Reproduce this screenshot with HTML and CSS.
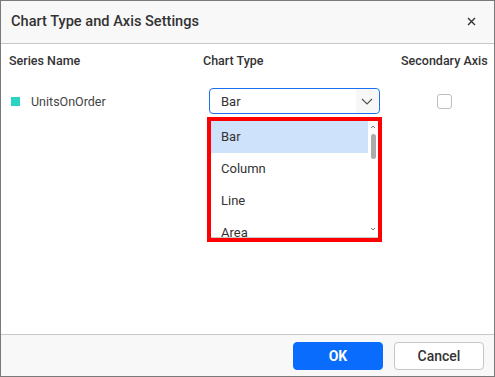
FILE: index.html
```html
<!DOCTYPE html>
<html lang="en">
<head>
    <meta charset="UTF-8">
    <meta name="viewport" content="width=device-width, initial-scale=1.0">
    <title>Chart Type and Axis Settings</title>
    <link rel="stylesheet" href="styles.css">
</head>
<body>
    <div class="dialog">
        <div class="dialog-header">
            <span class="dialog-title">Chart Type and Axis Settings</span>
            <button class="close-btn" aria-label="Close">
                <svg width="9" height="9" viewBox="0 0 9 9">
                    <path d="M1 1 L8 8 M8 1 L1 8" stroke="#333" stroke-width="1.4" fill="none"/>
                </svg>
            </button>
        </div>

        <div class="dialog-content">
            <div class="grid">
                <div class="col-head">Series Name</div>
                <div class="col-head">Chart Type</div>
                <div class="col-head">Secondary Axis</div>

                <div class="series">
                    <span class="swatch"></span>
                    <span>UnitsOnOrder</span>
                </div>
                <div class="type-cell">
                    <div class="dropdown">
                        <span class="dropdown-value">Bar</span>
                        <span class="dropdown-icon">
                            <svg width="12" height="7" viewBox="0 0 12 7">
                                <path d="M1 1 L6 6 L11 1" stroke="#555" stroke-width="1.2" fill="none"/>
                            </svg>
                        </span>
                    </div>
                    <div class="popup">
                        <ul class="popup-list">
                            <li class="active">Bar</li>
                            <li>Column</li>
                            <li>Line</li>
                            <li>Area</li>
                        </ul>
                        <div class="scrollbar">
                            <svg class="arrow" width="6" height="4" viewBox="0 0 6 4">
                                <path d="M1 3 L3 1 L5 3" stroke="#777" stroke-width="1" fill="none"/>
                            </svg>
                            <div class="thumb"></div>
                            <div class="track"></div>
                            <svg class="arrow" width="6" height="4" viewBox="0 0 6 4">
                                <path d="M1 1 L3 3 L5 1" stroke="#777" stroke-width="1" fill="none"/>
                            </svg>
                        </div>
                    </div>
                </div>
                <div class="check-cell">
                    <span class="checkbox"></span>
                </div>
            </div>
        </div>

        <div class="dialog-footer">
            <button class="btn btn-primary">OK</button>
            <button class="btn btn-default">Cancel</button>
        </div>
    </div>
</body>
</html>
```

FILE: styles.css
```css
body {
    margin: 0;
    font-family: Roboto, "Liberation Sans", sans-serif;
    color: #333;
}

.dialog {
    width: 495px;
    height: 377px;
    box-sizing: border-box;
    border: 1px solid #7a7a7a;
    display: flex;
    flex-direction: column;
    background: #fff;
}

.dialog-header {
    height: 42px;
    background: #f8f8f8;
    border-bottom: 1px solid #c8c8c8;
    display: flex;
    align-items: center;
    justify-content: space-between;
    padding: 0 18px 0 10px;
}

.dialog-title {
    font-size: 14.6px;
    font-weight: 500;
    color: #333;
    padding-bottom: 2px;
}

.close-btn {
    border: none;
    background: none;
    padding: 0;
    display: flex;
    margin-bottom: 2px;
}

.dialog-content {
    flex: 1;
    padding: 0 0 0 8px;
}

.grid {
    display: grid;
    grid-template-columns: 194px 198px 92px;
    grid-template-rows: 32px 26px;
    row-gap: 12px;
}

.col-head {
    font-size: 12.5px;
    font-weight: 500;
    color: #333;
    display: flex;
    align-items: center;
}

.series {
    display: flex;
    align-items: center;
    gap: 11px;
    padding-left: 2px;
    font-size: 12.5px;
    color: #444;
}

.swatch {
    width: 9px;
    height: 9px;
    background: #2ad4c4;
}

.type-cell {
    position: relative;
    padding-left: 6px;
}

.dropdown {
    width: 171px;
    height: 26px;
    box-sizing: border-box;
    border: 1px solid #1a6ff0;
    border-radius: 4px;
    display: flex;
    align-items: center;
    justify-content: space-between;
    padding-left: 11px;
    font-size: 13px;
    color: #333;
}

.dropdown-icon {
    width: 22px;
    height: 24px;
    display: flex;
    align-items: center;
    justify-content: center;
    background: #f7f7f7;
    margin-right: 1px;
    border-radius: 0 3px 3px 0;
}

.popup {
    position: absolute;
    top: 29px;
    left: 4px;
    width: 175px;
    height: 125px;
    box-sizing: border-box;
    border: 4px solid #ff0000;
    background: #fff;
    display: flex;
}

.popup-list {
    list-style: none;
    margin: 0;
    padding: 0;
    flex: 1;
    overflow: hidden;
    border-bottom: 1px solid #c8c8c8;
}

.popup-list li {
    height: 32px;
    line-height: 32px;
    padding-left: 10px;
    font-size: 13px;
    color: #333;
}

.popup-list li.active {
    background: #cfe2fc;
}

.scrollbar {
    width: 10px;
    display: flex;
    flex-direction: column;
    align-items: center;
    padding: 4px 0 6px;
    border-bottom: 1px solid #c8c8c8;
}

.arrow {
    display: block;
}

.thumb {
    width: 5px;
    height: 25px;
    background: #ababab;
    border-radius: 3px;
    margin-top: 5px;
}

.track {
    flex: 1;
}

.check-cell {
    display: flex;
    align-items: center;
    padding-left: 36px;
}

.checkbox {
    width: 15px;
    height: 15px;
    box-sizing: border-box;
    border: 1px solid #bdbdbd;
    border-radius: 3px;
    background: #fff;
}

.dialog-footer {
    height: 41px;
    background: #f8f8f8;
    border-top: 1px solid #c8c8c8;
    display: flex;
    justify-content: flex-end;
    align-items: center;
    gap: 11px;
    padding-right: 10px;
}

.btn {
    width: 90px;
    height: 28px;
    border-radius: 4px;
    font-family: Roboto, "Liberation Sans", sans-serif;
    font-size: 14px;
    box-sizing: border-box;
}

.btn-primary {
    background: #0a6cfd;
    border: 1px solid #0a6cfd;
    color: #fff;
    font-weight: 700;
}

.btn-default {
    background: #fff;
    border: 1px solid #c6c6c6;
    color: #333;
    font-weight: 500;
}
```
